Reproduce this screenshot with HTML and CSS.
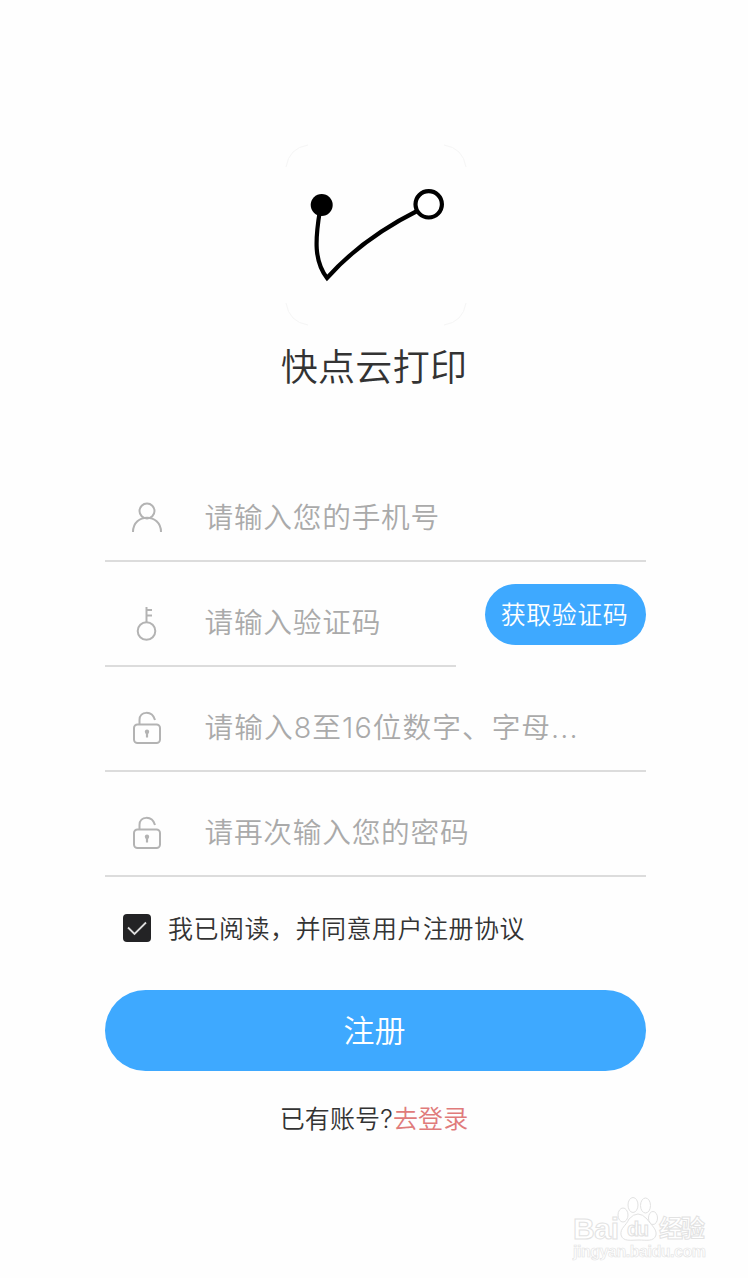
FILE: index.html
```
<!DOCTYPE html>
<html lang="zh-CN">
<head>
  <meta charset="utf-8">
  <title>快点云打印</title>
  <link rel="stylesheet" href="styles.css">
</head>
<body>

<header>
  <svg class="logo" viewBox="0 0 184 184">
    <path class="corner" d="M2 24Q5 5 24 2M160 2Q179 5 182 24M182 160Q179 179 160 182M24 182Q5 179 2 160"/>
    <path class="stroke" d="M36 67C31 97 30 118 43 135C67 108 99 85 135 67"/>
    <circle cx="37.7" cy="62" r="11"/>
    <circle class="ring" cx="144.7" cy="61.3" r="13.2"/>
  </svg>
  <h1>快点云打印</h1>
</header>

<form>
  <label class="field">
    <svg class="icon" viewBox="0 0 40 40"><circle cx="20" cy="13" r="7.5"/><path d="M6 34C6 15 34 15 34 34"/></svg>
    <input type="tel" placeholder="请输入您的手机号">
  </label>

  <div class="row">
    <label class="field">
      <svg class="icon" viewBox="0 0 40 40"><circle cx="19.5" cy="28" r="8.8"/><path d="M19.5 19V4M20 7H25M20 12.5H25"/></svg>
      <input type="text" placeholder="请输入验证码">
    </label>
    <button type="button" id="codeBtn">获取验证码</button>
  </div>

  <label class="field">
    <svg class="icon" viewBox="0 0 40 40"><rect x="7" y="16.5" width="26" height="18.5" rx="3.5"/><path d="M12.5 16V12C12.5 3 25 2 28 12"/><path class="hole" d="M20 24V29.5"/><circle class="dot" cx="20" cy="23.8" r="2.2"/></svg>
    <input type="text" class="wide" placeholder="请输入8至16位数字、字母...">
  </label>

  <label class="field">
    <svg class="icon" viewBox="0 0 40 40"><rect x="7" y="16.5" width="26" height="18.5" rx="3.5"/><path d="M12.5 16V12C12.5 3 25 2 28 12"/><path class="hole" d="M20 24V29.5"/><circle class="dot" cx="20" cy="23.8" r="2.2"/></svg>
    <input type="text" placeholder="请再次输入您的密码">
  </label>

  <div class="agree">
    <svg class="check" viewBox="0 0 28 28"><rect width="28" height="28" rx="4"/><path d="M5 13.5L11.5 20L23 8.5"/></svg>
    <span>我已阅读，并同意用户注册协议</span>
  </div>

  <button type="button" id="regBtn">注册</button>
</form>

<p class="login">已有账号?<a>去登录</a></p>

<footer>
  <svg viewBox="0 0 140 68">
    <text class="brand" x="1" y="44" textLength="46">Bai</text>
    <ellipse cx="51" cy="20" rx="5" ry="7"/>
    <ellipse cx="61" cy="10" rx="5" ry="7.5"/>
    <ellipse cx="73.5" cy="10.5" rx="5" ry="7.5"/>
    <ellipse cx="81" cy="23" rx="4.5" ry="6.5"/>
    <path d="M57 24Q66 14 75 24C79 30 85 34 84 40C82 47 74 45 67 45C59 45 51 47 49 40C48 33 54 31 57 24Z"/>
    <text class="du" x="55" y="41" textLength="22">du</text>
    <text class="cn" x="87" y="42" textLength="46">经验</text>
    <text class="url" x="1" y="62" textLength="133">jingyan.baidu.com</text>
  </svg>
</footer>

</body>
</html>
```
FILE: styles.css
```
:root { --blue:#3ea9ff; --line:#dcdcdc; --hint:#aaa; --fg:#333;
        --sans:Inter,"Noto Sans CJK SC",sans-serif; }
*{box-sizing:border-box}
body{margin:0;height:1278px;padding:143px 102px 0 105px;background:#fefefe;color:var(--fg);
     display:flex;flex-direction:column;overflow:hidden;
     font-family:var(--sans);font-weight:350}
header{text-align:center}
.logo{display:block;width:184px;height:184px;margin:0 auto}
.logo path,.logo .ring{fill:none}
.logo .corner{stroke:#f5f5f5;stroke-width:1}
.logo .stroke{stroke:#000;stroke-width:4.2}
.logo .ring{stroke:#000;stroke-width:4.2;fill:#fff}
h1{margin:14px 3px 0 0;font-size:37px;line-height:54px;font-weight:350;letter-spacing:.3px}

form{margin-top:62px}
.field{display:flex;align-items:center;height:105px;padding:19px 0 0 22px;
       border-bottom:2px solid var(--line)}
.icon{flex:none;width:40px;height:40px;fill:none;stroke:#b3b3b3;stroke-width:2}
.icon .hole{stroke-width:2.2}
.icon .dot{fill:#b3b3b3;stroke:none}
input{flex:1;min-width:0;margin-left:37.5px;padding:0;border:0;outline:0;background:none;
      font:350 28.7px/42px var(--sans);letter-spacing:.75px;height:42px}
input::placeholder{color:var(--hint);opacity:1}
.wide{letter-spacing:1.05px}
.row{display:flex;justify-content:space-between}
.row .field{width:351px}
button{border:0;padding:0;background:var(--blue);color:#fff;
       font-family:var(--sans);font-weight:350}
#codeBtn{width:161px;height:61px;margin-top:22px;padding:0 2px 3px 0;border-radius:31px;
         font-size:25px;letter-spacing:.5px}
.agree{display:flex;align-items:center;height:36px;margin-top:33px;padding-left:17.5px;
       font-size:25px;letter-spacing:.5px;white-space:nowrap}
.agree span{margin-top:-2px}
.check{width:28px;height:28px;margin-right:17.5px;fill:#232325}
.check path{fill:none;stroke:#ddd;stroke-width:1.8}
#regBtn{display:block;width:541px;height:81px;margin-top:44px;padding:0 2px 5px 0;
        border-radius:41px;font-size:31px}
.login{margin:30px 3px 0 0;font-size:25px;line-height:36px;letter-spacing:.15px;text-align:center}
.login a{color:#e07b7b}

footer{width:140px;margin:58px -66px 0 auto}
footer svg{display:block;width:140px;height:68px;fill:#fff;stroke:#e2e2e2;stroke-width:1}
footer text{font-family:"Liberation Sans","Noto Sans CJK SC",sans-serif;font-weight:700}
.brand{font-size:30px}
.du{font-size:20px}
.cn{font-size:24px}
.url{font-size:16px;stroke-width:.6}
```
